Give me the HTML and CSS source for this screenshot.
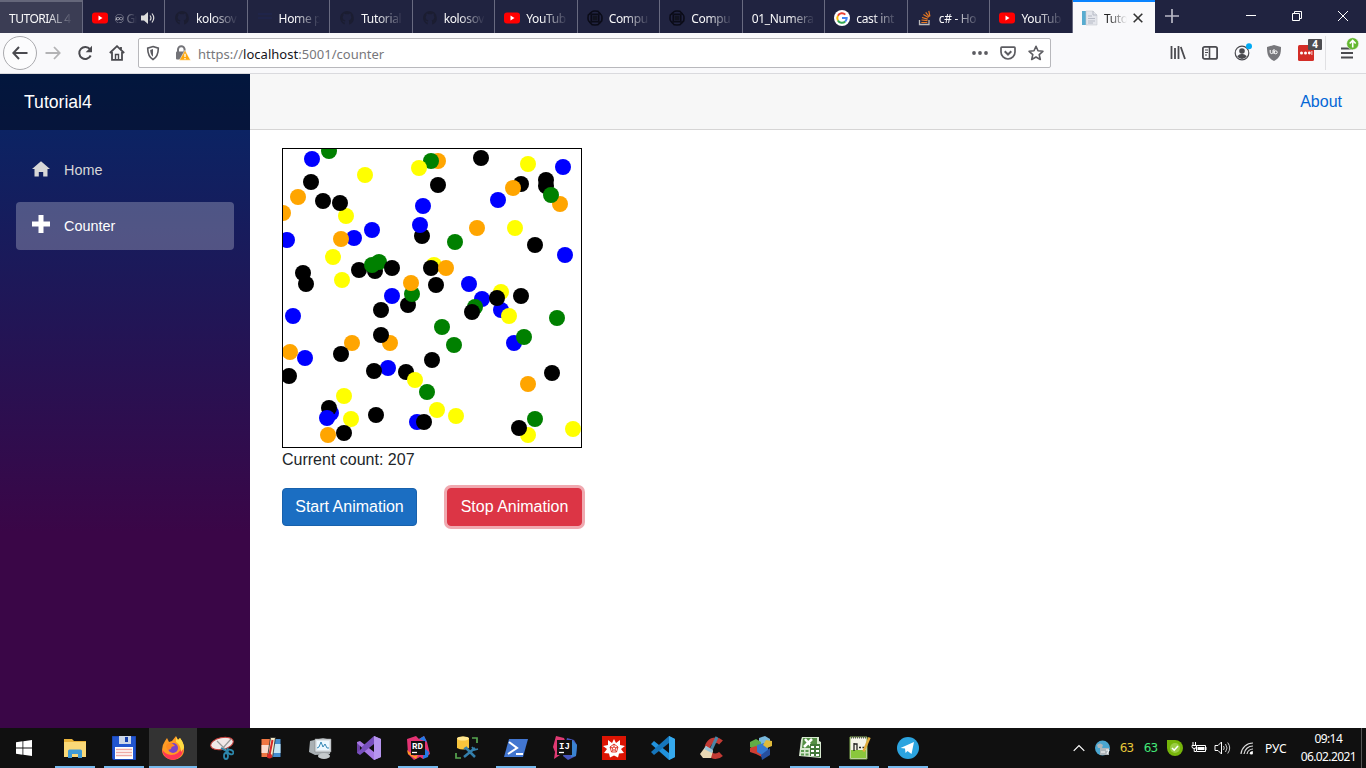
FILE: index.html
```html
<!DOCTYPE html>
<html lang="en">
<head>
<meta charset="utf-8">
<title>Tutorial4</title>
<link rel="stylesheet" href="styles.css">
</head>
<body>
<svg class="defs" aria-hidden="true">
  <symbol id="yt" viewBox="0 0 16 16"><rect y="2.500" width="16" height="11" rx="3" fill="#f00"/><path d="M6.500 5.500l4 2.500-4 2.500z" fill="#fff"/></symbol>
  <symbol id="gh" viewBox="0 0 16 16"><path d="M8 1a7 7 0 0 0-2.300 13.600v-2.200C4 12.500 3.700 11 3 10.500c1.500 0 1.700 1.200 3 1 0-.6.200-1 .5-1.200C3.500 10 3 7 4.500 5.500c-.2-.6-.2-1.400.1-2 1 .1 1.600.6 2 .8a7 7 0 0 1 3 0c.5-.3 1-.7 2-.8.3.7.300 1.400 0 2C13 7 12.500 10 9.600 10.300c.4.4.5 1 .5 1.600v2.700A7 7 0 0 0 8 1z" fill="#1b1d31"/></symbol>
  <symbol id="gpt" viewBox="0 0 16 16"><g fill="none" stroke="#0b0c18" stroke-width="1.100"><circle cx="8" cy="8" r="7"/><rect x="4.500" y="4.500" width="7" height="7" rx="1"/><path d="M1 5l5-4h5l4 5v5l-4 4H5l-4-5zM4 2v12M12 2v12M2 4h12M2 12h12"/></g><rect x="5.500" y="5.500" width="5" height="5" fill="#11131f"/></symbol>
</svg>
<header class="tabs">
  <div class="tab pinned"><span class="label">TUTORIAL 4</span></div>
  <div class="tab"><svg class="fav"><use href="#yt"/></svg><span class="label audio">♾ Gr</span>
    <svg class="speaker" viewBox="0 0 14 14"><path d="M0 4.500h3L7 1v12L3 9.500H0z" fill="#ddd"/><path d="M9 4.500q2 2.500 0 5M11 2.500q3.500 4.500 0 9" fill="none" stroke="#ddd" stroke-width="1.200"/></svg></div>
  <div class="tab"><svg class="fav"><use href="#gh"/></svg><span class="label">kolosov</span></div>
  <div class="tab"><svg class="fav" viewBox="0 0 16 16"><path d="M1 4h14M1 8h14" stroke="#1f2449" stroke-width="2"/></svg><span class="label">Home p</span></div>
  <div class="tab"><svg class="fav"><use href="#gh"/></svg><span class="label">Tutorial</span></div>
  <div class="tab"><svg class="fav"><use href="#gh"/></svg><span class="label">kolosov</span></div>
  <div class="tab"><svg class="fav"><use href="#yt"/></svg><span class="label">YouTub</span></div>
  <div class="tab"><svg class="fav"><use href="#gpt"/></svg><span class="label">Compu</span></div>
  <div class="tab"><svg class="fav"><use href="#gpt"/></svg><span class="label">Compu</span></div>
  <div class="tab"><span class="label">01_Numeral</span></div>
  <div class="tab"><svg class="fav" viewBox="0 0 16 16"><circle cx="8" cy="8" r="8" fill="#fff"/><g fill="none" stroke-width="2"><path d="M11.300 4.600A4.700 4.700 0 0 0 3.900 5.700" stroke="#ea4335"/><path d="M3.900 5.700a4.700 4.700 0 0 0 0 4.700" stroke="#fbbc05"/><path d="M3.900 10.400a4.700 4.700 0 0 0 7.300 1.100" stroke="#34a853"/><path d="M11.200 11.500A4.600 4.600 0 0 0 12.700 8H8" stroke="#4285f4"/></g></svg><span class="label">cast int</span></div>
  <div class="tab"><svg class="fav" viewBox="0 0 16 16"><path d="M2.500 10v4.500h9.500V10" fill="none" stroke="#bcbbbb" stroke-width="1.300"/><path d="M4.300 12.500h6M4.500 10l6 .7M5 7.500l5.700 1.600M6.400 4.600l5 3M8.700 2.300l3.600 4.500M11.800.8l1.100 5.500" stroke="#e87922" stroke-width="1.200"/></svg><span class="label">c# - Ho</span></div>
  <div class="tab"><svg class="fav"><use href="#yt"/></svg><span class="label">YouTub</span></div>
  <div class="tab active"><svg class="fav" viewBox="0 0 16 16"><path d="M0 1h4v14H0z" fill="#58acd0"/><path d="M4 1h7l4 4v10H4z" fill="#e4e6ec" stroke="#c8cbd2" stroke-width=".6"/><path d="M11 1v4h4M6 6h4M6 8.500h7M6 11h7M6 13h5" fill="none" stroke="#b6bac5"/></svg><span class="label">Tuto</span>
    <svg class="close" viewBox="0 0 10 10"><path d="M.7.7l8.600 8.600M9.300.7L.7 9.300" stroke="#333" stroke-width="1.600"/></svg></div>
  <svg class="plus" viewBox="0 0 14 14"><path d="M7 0v14M0 7h14" stroke="#b9b9c6" stroke-width="1.700"/></svg>
  <div class="window-buttons">
    <svg viewBox="0 0 12 12"><path d="M1 5.500h10" stroke="#fff"/></svg>
    <svg viewBox="0 0 12 12"><path d="M1.500 3.500h7v7h-7zM3.500 3.500v-2h7v7h-2" fill="none" stroke="#fff"/></svg>
    <svg viewBox="0 0 12 12"><path d="M1 1l10 10M11 1L1 11" stroke="#fff"/></svg>
  </div>
</header>
<nav class="toolbar">
  <span class="back"><svg width="16" height="14" viewBox="0 0 16 14"><path d="M15.500 7H1.500M7 1L1.300 7 7 13" fill="none" stroke="#4a4a4f" stroke-width="2"/></svg></span>
  <svg class="forward" viewBox="0 0 16 14"><path d="M.5 7h14M9 1l5.700 6L9 13" fill="none" stroke="#b3b3b5" stroke-width="1.800"/></svg>
  <svg class="reload" viewBox="0 0 16 16"><path d="M13 4.200A6 6 0 1 0 13.700 10.500" fill="none" stroke="#4a4a4f" stroke-width="2"/><path d="M15 .8v6.400H8.700z" fill="#4a4a4f"/></svg>
  <svg class="house" viewBox="0 0 16 16"><path d="M.8 8L8 1.200 15.200 8M3 7v7.800h10V7M12 2v3" fill="none" stroke="#4a4a4f" stroke-width="1.800"/><path d="M6.500 15V9.500h3V15" fill="none" stroke="#4a4a4f" stroke-width="1.400"/></svg>
  <div class="url">
    <svg class="shield" viewBox="0 0 14 16"><path d="M7 1.500l5.300 1.700c0 5-.8 8.600-5.300 11.300C2.500 11.800 1.700 8.200 1.700 3.200z" fill="none" stroke="#5c5c61" stroke-width="1.600"/><path d="M7 4v7.800C5 10 4.300 8 4.200 5z" fill="#5c5c61"/></svg>
    <svg class="lock" viewBox="0 0 16 16"><path d="M3 7V4.500a3.300 3.300 0 0 1 6.600 0V7" fill="none" stroke="#737378" stroke-width="2"/><rect x="1" y="6.500" width="10" height="8" rx="1" fill="#737378"/><path d="M10 5.200l5.600 10H4.400z" fill="#ffa80b" stroke="#fff" stroke-width=".5"/><path d="M10 8.700v3.300M10 13v1.200" stroke="#fff" stroke-width="1.300"/></svg>
    <span class="address">https://<b>localhost</b>:5001/counter</span>
    <svg class="dots" viewBox="0 0 16 4"><g fill="#5c5c61"><circle cx="2" cy="2" r="1.900"/><circle cx="8" cy="2" r="1.900"/><circle cx="14" cy="2" r="1.900"/></g></svg>
    <svg class="act" viewBox="0 0 16 16"><path d="M1.800 2.200h12.400q.8 0 .8.800v4a7 7 0 0 1-14 0V3q0-.8.800-.8z" fill="none" stroke="#5c5c61" stroke-width="1.700"/><path d="M4.700 6.300L8 9.500l3.300-3.200" fill="none" stroke="#5c5c61" stroke-width="2"/></svg>
    <svg class="act" viewBox="0 0 16 16"><path d="M8 1.300l2 4.500 4.900.5-3.700 3.300 1.100 4.900L8 12l-4.300 2.500 1.100-4.900L1.100 6.300 6 5.800z" fill="none" stroke="#5c5c61" stroke-width="1.600" stroke-linejoin="round"/></svg>
  </div>
  <div class="tools">
    <svg width="16" height="16" viewBox="0 0 16 16"><path d="M1.500 1v13M5 3v11M8.500 1v13M10.800 2L15 14" stroke="#4a4a4f" stroke-width="1.800"/></svg>
    <svg width="16" height="16" viewBox="0 0 16 16"><rect x=".9" y="1.900" width="14.200" height="12" rx="1.700" fill="none" stroke="#4a4a4f" stroke-width="1.800"/><path d="M7.500 2v12" stroke="#4a4a4f" stroke-width="1.600"/><path d="M3 5h3M3 7.500h3M3 10h2" stroke="#4a4a4f"/></svg>
    <svg width="20" height="20" viewBox="0 0 20 20"><circle cx="10" cy="10" r="6.800" fill="none" stroke="#4a4a4f" stroke-width="1.200"/><circle cx="10" cy="8" r="2.800" fill="#4a4a4f"/><path d="M5.200 13.200q2-2.500 4.800-2.500t4.800 2.500Q13 16 10 16t-4.800-2.800z" fill="#4a4a4f"/><circle cx="17" cy="3.300" r="3" fill="#00aaf4"/></svg>
    <svg width="16" height="16" viewBox="0 0 16 16"><path d="M8 0l7 2c0 7-1 11-7 14C2 13 1 9 1 2z" fill="#77777b"/><path d="M4.200 5v2.200a1.400 1.400 0 0 0 2.800 0V5M8 4v5" fill="none" stroke="#fff"/><circle cx="9.700" cy="7.300" r="1.500" fill="none" stroke="#fff"/></svg>
    <span class="pass"><svg width="16" height="16" viewBox="0 0 16 16"><rect width="16" height="16" rx="1.500" fill="#d32d27"/><g fill="#fff"><circle cx="3.500" cy="8" r="1.500"/><circle cx="7.500" cy="8" r="1.500"/><circle cx="11.300" cy="8" r="1.400"/><path d="M13.500 6h.8v4h-.8z"/></g></svg><i>4</i></span>
    <span class="divider"></span>
    <svg class="menu" width="26" height="32" viewBox="0 0 26 32"><path d="M7 11.500h12M7 16h12M7 20.500h12" stroke="#4a4a4f" stroke-width="1.800"/><circle cx="18.700" cy="6.700" r="6" fill="#64b82f" stroke="#f9f9fb" stroke-width=".5"/><path d="M18.700 10.500v-7M15.700 6.500l3-3 3 3" fill="none" stroke="#fff" stroke-width="1.600"/></svg>
  </div>
</nav>
<div class="page">
  <aside class="sidebar">
    <div class="brand">Tutorial4</div>
    <a class="nav-link"><svg width="18" height="18" viewBox="0 0 18 18"><path d="M9 1.200L0 9h2.500v7.500h4.300V12h4.400v4.500h4.300V9H18z" fill="#d7d7d7"/></svg>Home</a>
    <a class="nav-link current"><svg width="18" height="18" viewBox="0 0 18 18"><path d="M6.500 0h5v6.500H18v5h-6.500V18h-5v-6.500H0v-5h6.500z" fill="#fff"/></svg>Counter</a>
  </aside>
  <main>
    <div class="top-row"><a>About</a></div>
    <div class="content">
      <svg class="field" viewBox="283 149 298 298">
        <circle class="blue" cx="312" cy="159"/><circle class="green" cx="329" cy="151"/><circle class="yellow" cx="365" cy="175"/><circle class="orange" cx="438" cy="161"/><circle class="green" cx="431" cy="161"/><circle class="yellow" cx="419" cy="168"/>
        <circle cx="311" cy="182"/><circle class="orange" cx="298" cy="197"/><circle cx="323" cy="201"/><circle class="yellow" cx="346" cy="216"/><circle cx="340" cy="203"/><circle class="orange" cx="283" cy="213"/>
        <circle class="blue" cx="287" cy="240"/><circle class="blue" cx="354" cy="238"/><circle class="orange" cx="341" cy="239"/><circle class="blue" cx="372" cy="230"/><circle class="yellow" cx="333" cy="257"/><circle class="yellow" cx="342" cy="280"/>
        <circle cx="303" cy="273"/><circle cx="306" cy="284"/><circle cx="359" cy="270"/><circle cx="375" cy="271"/><circle class="green" cx="379" cy="262"/><circle class="green" cx="372" cy="265"/><circle cx="392" cy="268"/>
        <circle class="blue" cx="423" cy="206"/><circle cx="422" cy="236"/><circle class="blue" cx="420" cy="225"/><circle cx="438" cy="185"/><circle class="yellow" cx="434" cy="265"/><circle cx="431" cy="268"/><circle class="orange" cx="446" cy="268"/><circle cx="436" cy="285"/>
        <circle cx="408" cy="305"/><circle class="green" cx="412" cy="294"/><circle class="orange" cx="411" cy="283"/><circle class="blue" cx="392" cy="296"/>
        <circle cx="481" cy="158"/><circle class="yellow" cx="528" cy="164"/><circle class="blue" cx="563" cy="167"/><circle cx="521" cy="184"/><circle class="orange" cx="513" cy="188"/><circle cx="546" cy="180"/><circle cx="546" cy="186"/><circle class="orange" cx="560" cy="204"/><circle class="green" cx="551" cy="195"/>
        <circle class="blue" cx="498" cy="200"/><circle class="orange" cx="477" cy="228"/><circle class="yellow" cx="515" cy="228"/><circle class="green" cx="455" cy="242"/><circle cx="535" cy="245"/><circle class="blue" cx="565" cy="255"/><circle class="blue" cx="469" cy="284"/>
        <circle class="blue" cx="482" cy="299"/><circle class="yellow" cx="501" cy="292"/><circle class="blue" cx="501" cy="310"/><circle cx="497" cy="298"/><circle cx="521" cy="296"/><circle class="green" cx="475" cy="307"/><circle cx="472" cy="312"/><circle class="yellow" cx="509" cy="316"/>
        <circle class="green" cx="557" cy="318"/><circle class="blue" cx="514" cy="343"/><circle class="green" cx="524" cy="337"/><circle class="green" cx="442" cy="327"/><circle class="green" cx="454" cy="345"/><circle cx="432" cy="360"/><circle cx="552" cy="373"/><circle class="orange" cx="528" cy="384"/>
        <circle class="green" cx="535" cy="419"/><circle class="yellow" cx="528" cy="435"/><circle cx="519" cy="428"/><circle class="yellow" cx="573" cy="429"/><circle class="yellow" cx="437" cy="410"/><circle class="yellow" cx="456" cy="416"/><circle class="green" cx="427" cy="392"/>
        <circle class="blue" cx="293" cy="316"/><circle class="orange" cx="290" cy="352"/><circle class="blue" cx="305" cy="358"/><circle cx="289" cy="376"/><circle cx="381" cy="310"/><circle class="orange" cx="390" cy="343"/><circle cx="381" cy="335"/><circle class="orange" cx="352" cy="343"/><circle cx="341" cy="354"/>
        <circle class="blue" cx="388" cy="368"/><circle cx="374" cy="371"/><circle cx="406" cy="372"/><circle class="yellow" cx="415" cy="380"/><circle class="yellow" cx="344" cy="396"/><circle class="yellow" cx="351" cy="419"/><circle class="blue" cx="331" cy="413"/><circle cx="329" cy="408"/><circle class="blue" cx="327" cy="418"/>
        <circle class="orange" cx="328" cy="435"/><circle cx="344" cy="433"/><circle cx="376" cy="415"/><circle class="blue" cx="417" cy="422"/><circle cx="424" cy="422"/>
      </svg>
      <p>Current count: 207</p>
      <div class="buttons"><button class="start">Start Animation</button><button class="stop">Stop Animation</button></div>
    </div>
  </main>
</div>
<footer class="taskbar">
  <div class="task win"><svg viewBox="0 0 24 24"><path d="M4 6.200l6.500-.9v6.200H4zM11.300 5.200L20 4v7.500h-8.700zM4 12.400h6.500v6.300L4 17.800zM11.300 12.400H20V20l-8.700-1.200z" fill="#fff"/></svg></div>
  <div class="task run"><svg viewBox="0 0 24 24"><path d="M1 3h8l2 2h12v16H1z" fill="#e9b33b"/><path d="M1 6h22v15H1z" fill="#fad978"/><path d="M5 22v-7q0-1.500 1.500-1.500h11q1.500 0 1.500 1.500v7h-4v-4H9v4z" fill="#409bd6"/></svg></div>
  <div class="task run"><svg viewBox="0 0 24 24"><path d="M0 0h24v24H1.500L0 22z" fill="#2255cf" stroke="#153a9c"/><path d="M7 0h12v8H7z" fill="#ccd6e8"/><path d="M13 1h3v5h-3z" fill="#143fac"/><path d="M3 11h18v12H3z" fill="#fff"/><path d="M4 13.500h16M4 16.500h16M4 19.500h16" stroke="#efaaa5" stroke-width="1.300"/></svg></div>
  <div class="task run hot"><svg viewBox="0 0 24 24"><path d="M4 5l2-3 2 4 3-1 4-5 2 4 2-2q5 7 4 12a11 10 0 0 1-22 0q0-5 3-9z" fill="#ff9b24"/><path d="M1 13q2 5 9 6 8 0 12-9 1 12-10 14Q2 23 1 13z" fill="#ff3755"/><path d="M15 1l2 3 2-2q4 5 4 10l-3 4q0-7-5-10z" fill="#ffdc43"/><circle cx="12" cy="12" r="5" fill="#7944cb"/><path d="M6 8q4-2 6 0l2 2q-4 0-4 3l-3 1q-3-3-1-6z" fill="#ff8b22"/></svg></div>
  <div class="task"><svg viewBox="0 0 24 24"><ellipse cx="12" cy="7.500" rx="11.500" ry="5.800" fill="#f1e8e8" stroke="#c73f3b" transform="rotate(-12 12 7.500)"/><path d="M12 13L21 3M17 15L7 5" stroke="#999" stroke-width="1.200"/><g fill="none" stroke="#2c87ab" stroke-width="1.800"><ellipse cx="16" cy="20" rx="2" ry="3"/><ellipse cx="20.500" cy="16" rx="3" ry="2" transform="rotate(25 20.500 16)"/><path d="M11 12l7 4M18 12l-2 5"/></g></svg></div>
  <div class="task"><svg viewBox="0 0 24 24"><path d="M2.500 3h9v18h-9z" fill="#ef7743"/><path d="M2.500 9h9v8h-9z" fill="#fbdccf"/><path d="M12 3h9.500v18H12z" fill="#458dd0"/><path d="M13 8h8.500v9H13z" fill="#c8e6f5"/><path d="M11.500 1.500h5l-3 20h-5z" fill="#f6ecca" stroke="#222" stroke-width=".8"/><path d="M13.500 4l-3 15" stroke="#d72626" stroke-width="2"/><circle cx="10.500" cy="20" r="2.500" fill="#d72626"/></svg></div>
  <div class="task"><svg viewBox="0 0 24 24"><path d="M2 5l13-3 8 2-1 14-15 1-6-3z" fill="#a9b0b4"/><path d="M7 3h16v13H7z" fill="#dde4e8" stroke="#888" stroke-width=".6"/><path d="M9 5h12v9H9z" fill="#edf8ff"/><path d="M9 12l2-1 2-5 2 5 2-3 2 4h2" fill="none" stroke="#3487b5"/><ellipse cx="16" cy="20" rx="6" ry="3" fill="#c5cacc"/></svg></div>
  <div class="task"><svg viewBox="0 0 24 24"><path d="M17 0l7 3v18l-7 3L0 9V6l3-1 14 11z" fill="#a779e4"/><path d="M17 0l7 3v18l-7 3z" fill="#b695ee"/><path d="M0 17l3 2L17 8V0L0 15z" fill="#7850be"/><path d="M0 7l5 5-5 5z" fill="#6c41a5"/><path d="M3 10l2 2-2 2z" fill="#101010"/></svg></div>
  <div class="task run"><svg viewBox="0 0 24 24"><path d="M1 3l9-3 3 3 5-3 3 6 3 12-7 5-3-2-6 3-6-6z" fill="#e43373"/><path d="M13 3l5-3 3 6zM18 12l5 4-1 5-5 2z" fill="#227be8"/><path d="M1 14l7 6 4-1-2 4-8-5z" fill="#ff9724"/><path d="M5 5h14v14H5z" fill="#111"/><text x="6" y="12.500" class="ide">RD</text><path d="M6 16.500h5" stroke="#fff" stroke-width="1.300"/></svg></div>
  <div class="task"><svg viewBox="0 0 24 24"><path d="M2 2q6-3 12 0v10q-6 3-12 0z" fill="#f7c43c"/><ellipse cx="8" cy="2.500" rx="6" ry="2" fill="#ffe791"/><path d="M17 2h5v5M1 17v5h5" fill="none" stroke="#57a650" stroke-width="1.700"/><path d="M9 21l11-9M11 12l9 9" stroke="#347fab" stroke-width="2.500"/><path d="M17 11l2 3 4-1M9 13l3-2" fill="none" stroke="#347fab" stroke-width="1.800"/></svg></div>
  <div class="task run"><svg viewBox="0 0 24 24"><path d="M5 3h19l-5 18H0z" fill="#4276d0"/><path d="M5 6l8 6-9 6M12 18h7" fill="none" stroke="#fff" stroke-width="2.100"/></svg></div>
  <div class="task"><svg viewBox="0 0 24 24"><path d="M3 0l8 2 2 5-6 12-6 4 1-7-2-5z" fill="#df3a73"/><path d="M14 2l7 2 3 5-1 11-8 4-5-4z" fill="#4655bd"/><path d="M19 4l5 5-1 11-5 1z" fill="#3a83d0"/><path d="M4 4h15v15H4z" fill="#111"/><text x="6" y="12.500" class="ide">IJ</text><path d="M6 16.500h5" stroke="#fff" stroke-width="1.300"/></svg></div>
  <div class="task"><svg viewBox="0 0 24 24"><path d="M0 0h24v24H0z" fill="#dc1403"/><path d="M12 3l2 4 4-3v5l5 1-4 3 3 4-5 .5-1 4-4-2-4 2-1-4-5-.5 3-4-4-3 5-1V4l4 3z" fill="#fff"/><path d="M12 8l4 3-1.500 5h-5L8 11zM12 8v3m4 0l-2.500 1M14.500 16L13 14M9.500 16l1.500-2M8 11l2.500 1M12 11l2 1-1 2h-2l-1-2z" fill="none" stroke="#dc1403" stroke-width=".8"/></svg></div>
  <div class="task"><svg viewBox="0 0 24 24"><path d="M18 0l6 3v18l-6 3L0 8l3-3 15 12z" fill="#2192dd"/><path d="M18 0v7L3 19l-3-3z" fill="#1676bc"/><path d="M18 0l6 3v18l-6 3z" fill="#36a9ed"/></svg></div>
  <div class="task"><svg viewBox="0 0 24 24"><path d="M21 6.500A8 8 0 1 0 21 18" fill="none" stroke="#c23a34" stroke-width="5.500"/><path d="M17 1l-6 13" stroke="#4a86a7" stroke-width="3"/><path d="M6 10l7 5-2 7H3l-3-4z" fill="#ead9b5"/><path d="M6 10l7 4-1 3-8-4z" fill="#9ac6da"/></svg></div>
  <div class="task"><svg viewBox="0 0 24 24"><path d="M10 2l6-2 5 3v5l-6 2-5-3z" fill="#78b8dc"/><path d="M1 6l6-3 5 3v6l-6 2-5-3z" fill="#60ae46"/><path d="M1 12l6-2 6 3v8l-6-3-6-2z" fill="#cf3e33"/><path d="M8 9l7-2 4 3v6l-6 3-5-3z" fill="#3478d0"/><path d="M17 4l6 1v5l-5 2-4-3z" fill="#e0ba3a"/><path d="M12 19l9-7v7l-8 5z" fill="#264f9e"/></svg></div>
  <div class="task run"><svg viewBox="0 0 24 24"><path d="M4 1h17v4l2 1v16L1 20 3 4z" fill="#d7e8cf"/><path d="M5 2h14v10H4z" fill="#548f45"/><path d="M7 3l7 8M14 3L6 11" stroke="#fff" stroke-width="2.500"/><path d="M12 8h10v13l-10-1z" fill="#42783a"/><path d="M13 10h3v2h-3zM18 10h3v2h-3zM13 14h3v2h-3zM18 14h3v2h-3zM13 18h3v2h-3zM18 18h3v2h-3z" fill="#fff"/><path d="M3 14h3v2H3zM7.500 14h3v2h-3zM3 17.500h3v2H3zM7.500 17.500h3v2h-3z" fill="#5b9a50"/></svg></div>
  <div class="task run"><svg viewBox="0 0 24 24"><path d="M3 1h17v22H3z" fill="#f5f5e8" stroke="#83ae50"/><path d="M4 14h15v8H4z" fill="#8ac73c"/><path d="M7 7v8M7 8h3v6M12 11.500h2M15.500 11.500h2" fill="none" stroke="#222" stroke-width="1.300"/><path d="M22.500 1.500l-6 14" stroke="#e2ad3d" stroke-width="2.500"/><path d="M4 1.500h15" stroke="#555" stroke-width="2" stroke-dasharray="1 1"/></svg></div>
  <div class="task run"><svg viewBox="0 0 24 24"><circle cx="12" cy="12" r="11" fill="#2ca4df"/><path d="M4.500 12L18 6l-2.500 12-4-3-2 2-.5-4.500L15 9l-6 3.500z" fill="#fff"/></svg></div>
  <div class="tray">
    <svg class="chev" viewBox="0 0 12 8"><path d="M.7 6.800L6 1.500l5.300 5.300" fill="none" stroke="#fff" stroke-width="1.200"/></svg>
    <svg class="cloud" viewBox="0 0 16 16"><circle cx="7.500" cy="8" r="7.500" fill="#4aa6d0"/><path d="M2 5q3-3 6 0l-1 3H3zM5 8h9v7H5z" fill="#aeb6ba"/><path d="M6 12h4M11 10h3l-2 4" fill="none" stroke="#fff"/></svg>
    <span class="temp amber">63</span><span class="temp mint">63</span>
    <svg class="check" viewBox="0 0 16 16"><path d="M0 0h8a8 8 0 1 1-8 8z" fill="#76b50a"/><circle cx="8" cy="8" r="5" fill="#9bcd45"/><path d="M5 8l2.200 2.200L11 6" fill="none" stroke="#fff" stroke-width="1.600"/></svg>
    <svg class="battery" viewBox="0 0 16 14"><path d="M5.500 4.500h9v6h-9zM15 6v3M2 1v3M4.500 1v3M1 4.500h4.500v1q0 2-2.300 2T1 5.500zM3.200 7v3.500H5" fill="none" stroke="#fff"/><path d="M6.500 6h7v3h-7z" fill="#fff"/></svg>
    <svg class="volume" viewBox="0 0 17 14"><path d="M1 4.500h3L7.500 1v12L4 9.500H1z" fill="none" stroke="#fff"/><path d="M9.500 5q1.500 2 0 4M11.500 3q3 4 0 8M13.700 1.500q4 5.500 0 11" fill="none" stroke="#ccc"/></svg>
    <svg class="wifi" viewBox="0 0 14 14"><path d="M1 13A12 12 0 0 1 13 2M4 13a9 9 0 0 1 9-8M7 13a6 6 0 0 1 6-5M10 13q.5-2 3-2.500" fill="none" stroke="#ddd" stroke-width="1.200"/><circle cx="11.500" cy="12" r="1.500" fill="#fff"/></svg>
    <span class="lang">РУС</span>
    <span class="clock">09:14<br>06.02.2021</span>
  </div>
</footer>
</body>
</html>
```
FILE: styles.css
```css
* { box-sizing: border-box; }
body { margin: 0; height: 768px; overflow: hidden; display: flex; flex-direction: column; background: #fff; font-family: "Liberation Sans", Arial, sans-serif; font-size: 16px; color: #212529; }
svg { display: block; flex: none; }
.defs { width: 0; height: 0; position: absolute; }

.tabs { height: 33px; flex: none; background: #202340; display: flex; align-items: stretch; font: 12px "Noto Sans", "Segoe UI", sans-serif; color: #f9f9fa; }
.tab { width: 82.540px; flex: none; border-right: 1px solid #686a80; display: flex; align-items: center; padding: 2px 9px 0 9px; }
.tab.pinned { background: #3b3d54; border-top: 2px solid #65677a; padding-top: 0; }
.fav { width: 16px; height: 16px; margin-right: 6px; }
.label { flex: 1; min-width: 0; padding-top: 1px; white-space: nowrap; letter-spacing: -.35px; -webkit-mask-image: linear-gradient(to right, #000 calc(100% - 26px), transparent); mask-image: linear-gradient(to right, #000 calc(100% - 26px), transparent); }
.pinned .label { letter-spacing: -.5px; }
.label.audio { letter-spacing: -.6px; -webkit-mask-image: linear-gradient(to right, #000, transparent); mask-image: linear-gradient(to right, #000, transparent); }
.speaker { width: 14px; height: 14px; margin-left: 4px; }
.tab.active { background: #f9f9fb; color: #222; border: 0; border-top: 2px solid #0a84ff; padding-top: 0; }
.tab.active .label { -webkit-mask-image: linear-gradient(to right, #000 20%, transparent); mask-image: linear-gradient(to right, #000 20%, transparent); }
.close { width: 10px; height: 10px; margin: 0 3px 0 6px; }
.plus { width: 14px; height: 14px; margin: 9px 0 0 10px; }
.window-buttons { margin-left: auto; display: flex; gap: 34px; padding: 10px 17px 0 0; }
.window-buttons svg { width: 12px; height: 12px; }

.toolbar { height: 41px; flex: none; background: #f9f9fb; border-bottom: 1px solid #dadade; display: flex; align-items: center; padding-left: 3px; }
.back { width: 34px; height: 34px; border: 1px solid #aaaaae; border-radius: 50%; display: flex; align-items: center; justify-content: center; background: #fcfcfd; }
.forward { width: 16px; height: 14px; margin-left: 8px; }
.reload { width: 16px; height: 16px; margin-left: 16px; }
.house { width: 16px; height: 16px; margin-left: 16px; }
.url { width: 913px; height: 30px; margin-left: 13px; border: 1px solid #b8b8bc; border-radius: 2px; background: #fff; display: flex; align-items: center; }
.shield { width: 14px; height: 16px; margin-left: 7px; }
.lock { width: 16px; height: 16px; margin-left: 15px; }
.address { flex: 1; margin-left: 7px; padding-top: 2px; font: 13px "Noto Sans", "Segoe UI", sans-serif; letter-spacing: .03px; color: #77777b; }
.address b { font-weight: 400; color: #15141a; }
.dots { width: 16px; height: 4px; margin-right: 12px; }
.act { width: 16px; height: 16px; margin-right: 12px; }
.act:last-child { margin-right: 6px; }
.tools { flex: 1; display: flex; align-items: center; padding-left: 119px; }
.tools > :nth-child(2) { margin-left: 16px; }
.tools > :nth-child(3) { margin-left: 14px; }
.tools > :nth-child(4) { margin-left: 14px; }
.pass { position: relative; margin-left: 16px; }
.pass i { position: absolute; left: 10px; top: -6px; width: 14px; height: 11px; border-radius: 1px; background: #4d4d51; color: #fff; font: 700 10px/11px "Noto Sans", sans-serif; text-align: center; }
.divider { width: 1px; height: 34px; margin-left: 11px; background: #e0e0e3; }
.menu { margin-left: 8px; }

.page { height: 654px; flex: none; display: flex; }
.sidebar { width: 250px; background: linear-gradient(180deg, rgb(5,39,103) 0%, #3a0647 70%); display: flex; flex-direction: column; color: #d7d7d7; font-size: 14.400px; }
.brand { height: 56px; background: rgba(0,0,0,.4); color: #fff; padding-left: 24px; font-size: 17.600px; line-height: 56px; margin-bottom: 16px; }
.nav-link { height: 48px; margin: 0 16px 8px; padding-left: 16px; border-radius: 4px; display: flex; align-items: center; gap: 14px; line-height: 48px; }
.nav-link svg { margin-top: -2px; }
.nav-link.current svg { margin-top: -4px; }
.nav-link.current { background: rgba(255,255,255,.25); color: #fff; }
main { flex: 1; }
.top-row { height: 56px; background: #f7f7f7; border-bottom: 1px solid #d6d5d5; display: flex; justify-content: flex-end; align-items: center; padding-right: 24px; color: #0366d6; }
.content { padding: 18px 32px; }
.field { width: 300px; height: 300px; border: 1px solid #000; }
.field circle { r: 8px; fill: #000; }
.field .blue { fill: blue; }
.field .green { fill: green; }
.field .yellow { fill: yellow; }
.field .orange { fill: orange; }
p { margin: 0 0 16px; line-height: 24px; }
.buttons { display: flex; gap: 30px; }
button { width: 135px; height: 38px; padding: 0; border-radius: 4px; color: #fff; font: 16px "Liberation Sans", Arial, sans-serif; }
.start { background: #1b6ec2; border: 1px solid #1861ac; }
.stop { background: #dc3545; border: 1px solid #dc3545; box-shadow: 0 0 0 3px rgba(225,83,97,.5); }

.taskbar { height: 40px; flex: none; background: #101010; display: flex; color: #fff; font-family: "Noto Sans", "Segoe UI", sans-serif; }
.task { width: 48px; margin-right: 1px; height: 40px; display: flex; align-items: center; justify-content: center; padding-top: 2px; border-bottom: 2px solid transparent; }
.task svg { width: 24px; height: 24px; }
.task.win { margin-right: 3px; }
.task.run { background: linear-gradient(#76b9ed, #76b9ed) 4px 38px / 40px 2px no-repeat border-box; }
.task.run.hot { background: #333; border-color: #76b9ed; }
.ide { font: 700 9px "Liberation Mono", monospace; fill: #fff; }
.tray { margin-left: auto; width: 293px; display: flex; align-items: center; font-size: 12px; }
.chev { width: 12px; height: 8px; }
.cloud { width: 16px; height: 16px; margin-left: 10px; }
.temp { width: 15px; text-align: center; font: 12px "DejaVu Sans", sans-serif; letter-spacing: -1px; margin-left: 8px; }
.mint { margin-left: 9px; }
.amber { color: #e8c93a; }
.mint { color: #42e878; }
.check { width: 16px; height: 16px; margin-left: 9px; }
.battery { width: 16px; height: 14px; margin-left: 8px; }
.volume { width: 17px; height: 14px; margin-left: 7px; }
.wifi { width: 14px; height: 14px; margin-left: 9px; }
.lang { margin-left: 11px; }
.clock { margin-left: auto; margin-right: 4px; height: 40px; padding: 2px 5px 0 0; border-right: 1px solid #555; text-align: center; line-height: 18px; letter-spacing: -.6px; }
```
